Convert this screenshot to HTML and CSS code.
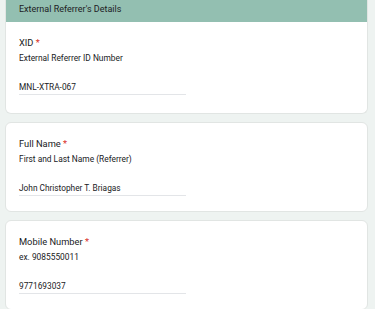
FILE: index.html
```html
<!DOCTYPE html>
<html lang="en">

<head>
  <meta charset="UTF-8">
  <meta name="viewport" content="width=device-width, initial-scale=1.0">
  <title>External Referrer's Details</title>
  <link rel="stylesheet" href="styles.css">
</head>

<body>
  <div class="form">
    <div class="card first">
      <div class="section-head">External Referrer's Details</div>
      <div class="question">
        <div class="label">XID <span class="req">*</span></div>
        <div class="hint">External Referrer ID Number</div>
        <div class="answer">MNL-XTRA-067</div>
      </div>
    </div>

    <div class="card">
      <div class="question">
        <div class="label">Full Name <span class="req">*</span></div>
        <div class="hint">First and Last Name (Referrer)</div>
        <div class="answer">John Christopher T. Briagas</div>
      </div>
    </div>

    <div class="card">
      <div class="question">
        <div class="label">Mobile Number <span class="req">*</span></div>
        <div class="hint">ex. 9085550011</div>
        <div class="answer">9771693037</div>
      </div>
    </div>
  </div>
</body>
</html>
```

FILE: styles.css
```css
body {
  margin: 0;
  background-color: #eef3f1;
  font-family: Roboto, "Liberation Sans", Arial, sans-serif;
  color: #202124;
}

.form {
  display: flex;
  flex-direction: column;
  gap: 8px;
  padding: 0 7px 0 5px;
}

.card {
  background-color: #fff;
  border: 1px solid #e1e5e3;
  border-radius: 6px;
  overflow: hidden;
}

.card.first {
  border-top: none;
  border-radius: 0 0 6px 6px;
}

.section-head {
  background-color: #93bfb1;
  height: 22px;
  line-height: 18px;
  padding-left: 13px;
  font-size: 9px;
}

.question {
  padding: 13px 13px 15px;
}

.first .question {
  padding-bottom: 18px;
}

.label {
  font-size: 9.3px;
  line-height: 16px;
}

.req {
  color: #d93025;
}

.hint {
  font-size: 8.4px;
  line-height: 15px;
}

.answer {
  width: 167px;
  margin-top: 14px;
  border-bottom: 1px solid #e3e5e8;
  font-size: 8.3px;
  line-height: 14px;
}
```
